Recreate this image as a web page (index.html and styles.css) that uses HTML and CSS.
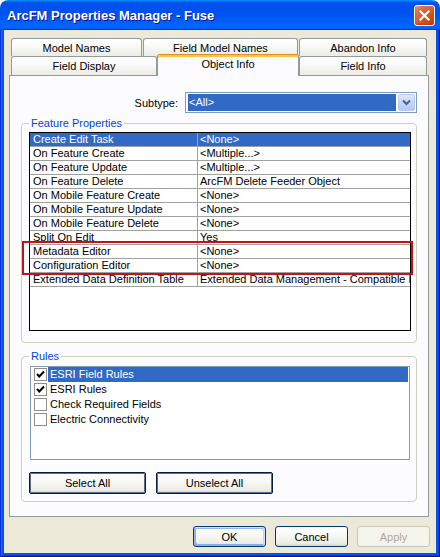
FILE: index.html
```html
<!DOCTYPE html>
<html>
<head>
<meta charset="utf-8">
<title>ArcFM Properties Manager - Fuse</title>
<link rel="stylesheet" href="styles.css">
</head>
<body>
<div class="window">
  <div class="titlebar">
    <span class="title">ArcFM Properties Manager - Fuse</span>
    <span class="close">
      <svg width="13" height="13" viewBox="0 0 13 13"><path d="M2.5 2.5 L10.5 10.5 M10.5 2.5 L2.5 10.5" stroke="#fff" stroke-width="2.2" stroke-linecap="square"/></svg>
    </span>
  </div>
  <div class="frame">
    <div class="client">
      <div class="tabs">
        <div class="tabrow">
          <div class="tab t-model">Model Names</div>
          <div class="tab t-fmn">Field Model Names</div>
          <div class="tab t-aband">Abandon Info</div>
        </div>
        <div class="tabrow">
          <div class="tab t-fdisp">Field Display</div>
          <div class="tab t-obj sel">Object Info</div>
          <div class="tab t-finfo">Field Info</div>
        </div>
      </div>
      <div class="panel">
        <div class="subtype">
          <span>Subtype:</span>
          <div class="combo">
            <div class="combo-value">&lt;All&gt;</div>
            <div class="combo-btn">
              <svg width="9" height="7" viewBox="0 0 9 7"><path d="M1 1.5 L4.5 5 L8 1.5" fill="none" stroke="#4D6185" stroke-width="2"/></svg>
            </div>
          </div>
        </div>

        <div class="group group-feat">
          <div class="group-title">Feature Properties</div>
          <div class="grid">
            <div class="row selected"><div class="c1">Create Edit Task</div><div class="c2">&lt;None&gt;</div></div>
            <div class="row"><div class="c1">On Feature Create</div><div class="c2">&lt;Multiple...&gt;</div></div>
            <div class="row"><div class="c1">On Feature Update</div><div class="c2">&lt;Multiple...&gt;</div></div>
            <div class="row"><div class="c1">On Feature Delete</div><div class="c2">ArcFM Delete Feeder Object</div></div>
            <div class="row"><div class="c1">On Mobile Feature Create</div><div class="c2">&lt;None&gt;</div></div>
            <div class="row"><div class="c1">On Mobile Feature Update</div><div class="c2">&lt;None&gt;</div></div>
            <div class="row"><div class="c1">On Mobile Feature Delete</div><div class="c2">&lt;None&gt;</div></div>
            <div class="row"><div class="c1">Split On Edit</div><div class="c2">Yes</div></div>
            <div class="row"><div class="c1">Metadata Editor</div><div class="c2">&lt;None&gt;</div></div>
            <div class="row"><div class="c1">Configuration Editor</div><div class="c2">&lt;None&gt;</div></div>
            <div class="row"><div class="c1">Extended Data Definition Table</div><div class="c2">Extended Data Management - Compatible L</div></div>
          </div>
        </div>

        <div class="group group-rules">
          <div class="group-title">Rules</div>
          <div class="listbox">
            <div class="item selected"><span class="cb"><svg width="11" height="11" viewBox="0 0 11 11"><path d="M2 5 L4.3 7.5 L9 2.5" fill="none" stroke="#000" stroke-width="2"/></svg></span><span class="label">ESRI Field Rules</span></div>
            <div class="item"><span class="cb"><svg width="11" height="11" viewBox="0 0 11 11"><path d="M2 5 L4.3 7.5 L9 2.5" fill="none" stroke="#000" stroke-width="2"/></svg></span><span class="label">ESRI Rules</span></div>
            <div class="item"><span class="cb"></span><span class="label">Check Required Fields</span></div>
            <div class="item"><span class="cb"></span><span class="label">Electric Connectivity</span></div>
          </div>
          <div class="rule-buttons">
            <div class="btn strong">Select All</div>
            <div class="btn strong">Unselect All</div>
          </div>
        </div>
      </div>
      <div class="dialog-buttons">
        <div class="btn dlg default">OK</div>
        <div class="btn dlg">Cancel</div>
        <div class="btn dlg disabled">Apply</div>
      </div>
    </div>
  </div>
  <div class="highlight"></div>
</div>
</body>
</html>
```
FILE: styles.css
```css
html, body {
  margin: 0;
  padding: 0;
  background: #ffffff;
}

.window {
  position: relative;
  width: 440px;
  height: 557px;
  display: flex;
  flex-direction: column;
  font-family: "Liberation Sans", Arial, sans-serif;
  font-size: 11px;
  color: #000;
}

/* ---------- title bar ---------- */
.titlebar {
  height: 30px;
  flex: none;
  box-sizing: border-box;
  display: flex;
  align-items: center;
  justify-content: space-between;
  padding: 0 5px 0 7px;
  border-radius: 8px 8px 0 0;
  background: linear-gradient(180deg, #0997ff, #0053ee 8%, #0050ee 40%, #0066ff 88%, #0066ff 93%, #005bff 95%, #003dd7 96%, #003dd7);
}

.title {
  color: #fff;
  font-weight: bold;
  font-size: 13px;
  text-shadow: 1px 1px #0f1089;
  margin-top: 1px;
}

.close {
  width: 21px;
  height: 21px;
  box-sizing: border-box;
  display: flex;
  align-items: center;
  justify-content: center;
  border: 1px solid #fff;
  border-radius: 3px;
  background: radial-gradient(circle at 85% 85%, #c84300 0%, #da5a2c 50%, #e0704a 75%, #f4a080 100%);
  box-shadow: inset 0 -1px 2px #b83a00;
}

/* ---------- frame ---------- */
.frame {
  flex: 1;
  display: flex;
  padding: 0 4px 4px 4px;
  background: #0055ea;
  box-shadow: inset 1px 0 #0831d9, inset -1px -1px #00138c, inset 2px 0 #166aee, inset -2px -2px #0a3fd0;
}

.client {
  flex: 1;
  background: #ece9d8;
  padding: 8px 6px 6px 5px;
  display: flex;
  flex-direction: column;
}

/* ---------- tabs ---------- */
.tabs {
  margin-left: 2px;
}

.tabrow {
  display: flex;
  align-items: flex-start;
}

.tabrow:first-child {
  height: 18px;
}

.tabrow:last-child {
  height: 19px;
}

.tab {
  box-sizing: border-box;
  display: flex;
  align-items: center;
  justify-content: center;
  border: 1px solid #919b9c;
  border-bottom: none;
  border-radius: 3px 3px 0 0;
  background: linear-gradient(180deg, #ffffff 0%, #fafaf8 40%, #ecebe5 100%);
  white-space: nowrap;
}

.tabrow:first-child .tab {
  height: 18px;
}

.tabrow:last-child .tab {
  height: 19px;
}

.t-model { width: 131px; margin-right: 1px; }
.t-fmn { width: 155px; margin-right: 1px; }
.t-aband { width: 128px; }
.t-fdisp { width: 146px; }
.t-obj { width: 142px; }
.t-finfo { width: 128px; }

.tabrow:last-child .tab.sel {
  position: relative;
  z-index: 2;
  height: 22px;
  margin-top: -2px;
  padding-bottom: 3px;
  background: #fcfcfe;
  border-top: 1px solid #e68b2c;
  box-shadow: inset 0 2px #ffc73c;
}

/* ---------- panel ---------- */
.panel {
  position: relative;
  z-index: 1;
  box-sizing: border-box;
  width: 420px;
  border: 1px solid #919b9c;
  background: #fcfcfe;
  padding: 16px 11px 14px 11px;
}

.subtype {
  display: flex;
  justify-content: flex-end;
  align-items: center;
  gap: 7px;
}

.combo {
  box-sizing: border-box;
  width: 232px;
  height: 21px;
  border: 1px solid #7f9db9;
  background: #fff;
  padding: 1px;
  display: flex;
  gap: 2px;
}

.combo-value {
  flex: 1;
  margin-left: 1px;
  background: #316ac5;
  color: #fff;
  line-height: 17px;
  padding-left: 1px;
}

.combo-btn {
  box-sizing: border-box;
  width: 17px;
  height: 17px;
  border: 1px solid #b9cbf3;
  border-radius: 2px;
  background: linear-gradient(180deg, #dfe8fe 0%, #c6d5fd 50%, #b4c7f6 100%);
  display: flex;
  align-items: center;
  justify-content: center;
}

/* ---------- group boxes ---------- */
.group {
  box-sizing: border-box;
  border: 1px solid #d0d0bf;
  border-radius: 4px;
  padding: 0 5px 11px 7px;
  margin-top: 10px;
}

.group-rules {
  margin-top: 13px;
  padding-bottom: 7px;
}

.group-title {
  width: max-content;
  margin: -7px 0 0 0;
  padding: 0 2px;
  line-height: 13px;
  color: #0046d5;
  background: #fcfcfe;
}

/* ---------- property grid ---------- */
.grid {
  box-sizing: border-box;
  margin-top: 2px;
  width: 382px;
  height: 199px;
  border: 1px solid #000;
  background: #fff;
  overflow: hidden;
}

.row {
  display: grid;
  grid-template-columns: 168px 1fr;
  height: 14px;
}

.row > div {
  box-sizing: border-box;
  border-bottom: 1px solid #a0a0a0;
  line-height: 13px;
  white-space: nowrap;
  overflow: hidden;
}

.row .c1 {
  border-right: 1px solid #a0a0a0;
  padding-left: 3px;
}

.row .c2 {
  padding-left: 2px;
}

.row.selected > div {
  background: #316ac5;
  color: #fff;
}

/* ---------- rules list ---------- */
.listbox {
  box-sizing: border-box;
  margin: 3px 0 0 1px;
  width: 380px;
  height: 94px;
  border: 1px solid #7f9db9;
  background: #fff;
}

.item {
  display: flex;
  align-items: center;
  height: 15px;
  padding-left: 3px;
  padding-right: 1px;
}

.cb {
  box-sizing: border-box;
  flex: none;
  width: 13px;
  height: 13px;
  border: 1px solid #8e8f8f;
  background: #fff;
  display: flex;
  align-items: center;
  justify-content: center;
}

.label {
  margin-left: 1px;
  padding-left: 2px;
  line-height: 15px;
}

.item.selected .label {
  flex: 1;
  background: #316ac5;
  color: #fff;
}

.rule-buttons {
  display: flex;
  gap: 10px;
  margin-top: 12px;
}

/* ---------- buttons ---------- */
.btn {
  box-sizing: border-box;
  display: flex;
  align-items: center;
  justify-content: center;
  border: 1px solid #003c74;
  border-radius: 3px;
  background: linear-gradient(180deg, #ffffff 0%, #f6f6f3 50%, #ecebe6 86%, #d6d0c5 100%);
}

.btn.strong {
  width: 117px;
  height: 22px;
  border: 1px solid #0a1d3a;
  box-shadow: inset 0 0 0 1px #5a6f8f;
  border-radius: 2px;
}

.dialog-buttons {
  display: flex;
  justify-content: flex-end;
  gap: 9px;
  margin-top: 9px;
}

.btn.dlg {
  width: 73px;
  height: 21px;
}

.btn.default {
  box-shadow: inset -1px 1px #cee7ff, inset 1px 2px #98b8ea, inset -2px 2px #bcd4f6, inset 1px -1px #89ade4, inset 2px -2px #89ade4;
}

.btn.disabled {
  border-color: #c9c7ba;
  background: #f5f4ea;
  color: #aca899;
}

/* ---------- annotation overlay ---------- */
.highlight {
  position: absolute;
  left: 22px;
  top: 241px;
  width: 391px;
  height: 34px;
  box-sizing: border-box;
  border: 2px solid #c0141c;
  z-index: 5;
  pointer-events: none;
}
```
